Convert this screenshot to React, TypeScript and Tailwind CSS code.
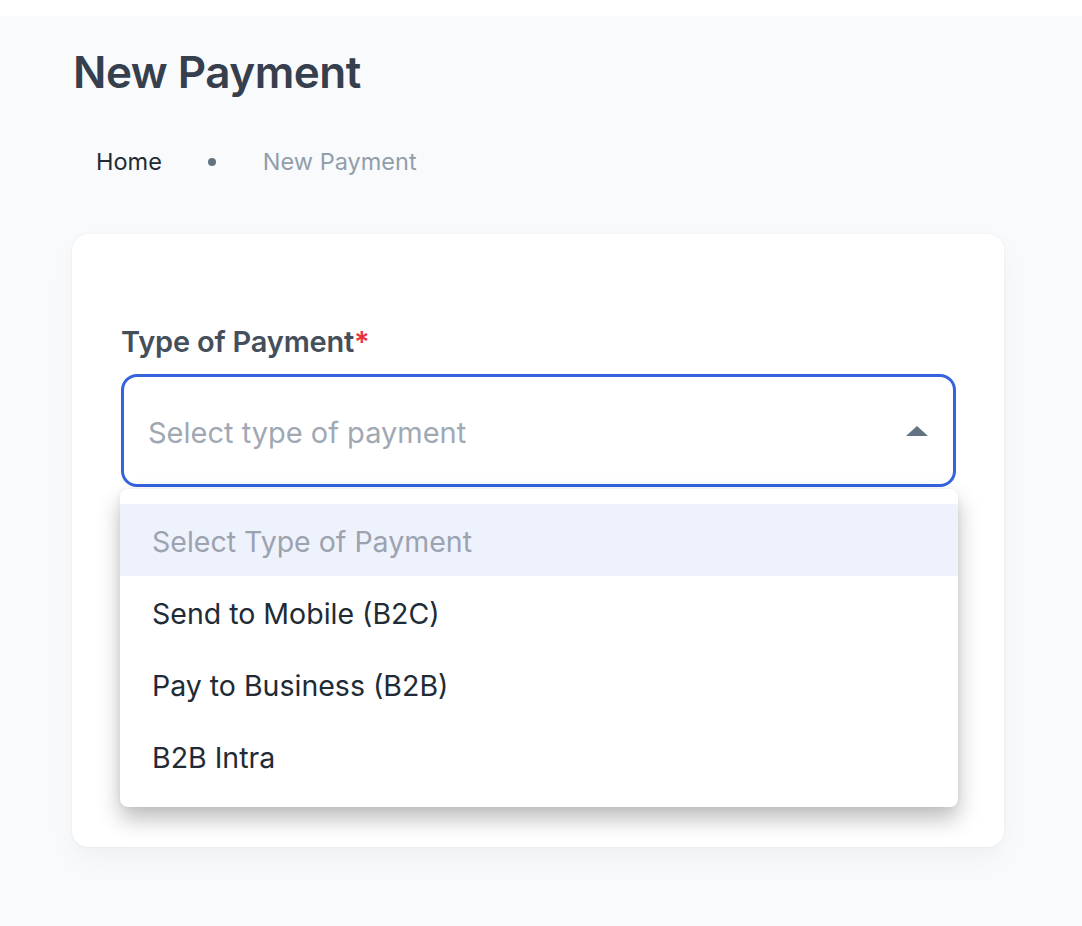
import { useState } from "react";

const options = [
  "Send to Mobile (B2C)",
  "Pay to Business (B2B)",
  "B2B Intra",
];

const NewPayment = () => {
  const [open] = useState(true);

  return (
    <div className="min-h-screen bg-[#f9fafb] font-['Inter','Roboto',sans-serif]">
      <div className="h-4 bg-white" />

      <div className="pl-[72px] pt-[30px]">
        {/* Header */}
        <h1 className="pl-px text-[44px] leading-[52px] font-semibold tracking-[-0.5px] text-[#363f4e]">
          New Payment
        </h1>

        {/* Breadcrumb */}
        <nav className="mt-[50px] flex items-center pl-6 text-[23.5px] leading-7">
          <span className="text-[#212b36]">Home</span>
          <span className="ml-[46px] mr-[47px] h-2 w-2 rounded-full bg-[#637381]" />
          <span className="text-[#919eab]">New Payment</span>
        </nav>

        {/* Card */}
        <div className="mt-[58px] h-[613px] w-[932px] rounded-2xl bg-white px-[49px] pt-[92px] shadow-[0_0_2px_rgba(145,158,171,0.2),0_12px_24px_-4px_rgba(145,158,171,0.12)]">
          <label className="block text-[29px] leading-8 font-semibold tracking-[-0.2px] text-[#454f5b]">
            Type of Payment<span className="text-[#e8323c]">*</span>
          </label>

          <div className="relative mt-[16px] w-[835px]">
            <button className="flex h-[113px] w-full items-center justify-between rounded-2xl border-[3px] border-[#3563e0] bg-white pl-6 pr-6 pt-1 text-left">
              <span className="text-[29px] text-[#a0a8b4]">Select type of payment</span>
              <svg width="24" height="12" viewBox="0 0 24 12" className="mt-[-4px]">
                <path d="M1 11 L12 1 L23 11 Z" fill="#637381" />
              </svg>
            </button>

            {open && (
              <ul className="absolute left-[-1px] top-[115px] w-[838px] rounded-lg bg-white py-[15px] shadow-[0_12px_22px_rgba(0,0,0,0.26),0_0_6px_rgba(0,0,0,0.06)]">
                <li className="flex h-[72px] items-center bg-[#eef2fd] pl-8 pt-1 text-[28.5px] text-[#9ca3af]">
                  Select Type of Payment
                </li>
                {options.map((o) => (
                  <li key={o} className="flex h-[72px] items-center pl-8 pt-1 text-[28.5px] text-[#212b36]">
                    {o}
                  </li>
                ))}
              </ul>
            )}
          </div>
        </div>
      </div>
    </div>
  );
};

export default function App() {
  return <NewPayment />;
}
